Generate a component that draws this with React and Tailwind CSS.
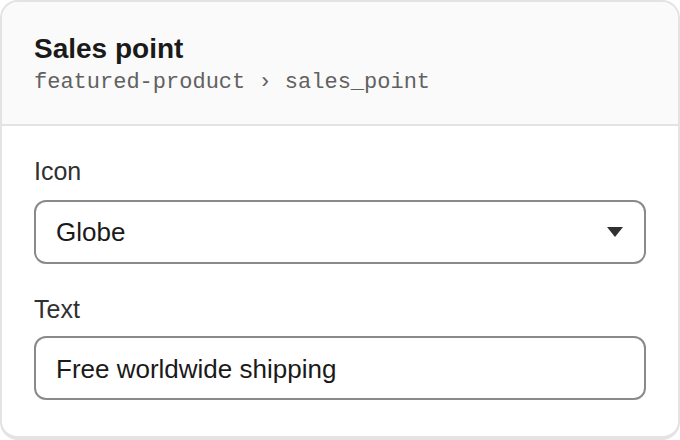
export default function App() {
  return (
    <div className="w-[680px] h-[440px] bg-white" style={{ fontFamily: '"Liberation Sans", Arial, sans-serif' }}>
      <div className="w-[680px] h-[440px] border-2 border-b-4 border-[#e3e3e3] rounded-[18px] overflow-hidden flex flex-col bg-white">
        <div className="h-[124px] shrink-0 bg-[#fafafa] border-b-2 border-[#e3e3e3] px-[32px] pt-[29px]">
          <div className="text-[28px] leading-[36px] font-bold text-[#1a1a1a]">Sales point</div>
          <div className="mt-[2px] text-[22px] leading-[28px] text-[#616161]" style={{ fontFamily: '"Liberation Mono", monospace' }}>
            featured-product › sales_point
          </div>
        </div>
        <div className="px-[32px] pt-[30px] flex flex-col">
          <label className="text-[25px] leading-[30px] text-[#303030]">Icon</label>
          <div className="mt-[14px] h-[64px] border-2 border-[#8a8a8a] rounded-[12px] flex items-center justify-between pl-[20px] pr-[20px]">
            <span className="text-[26px] leading-[30px] text-[#1a1a1a] -mt-[1px]">Globe</span>
            <svg width="16" height="10" viewBox="0 0 16 10" className="mr-[1px] -mt-[1px]">
              <polygon points="0,0 16,0 8,10" fill="#303030" />
            </svg>
          </div>
          <label className="mt-[30px] text-[25px] leading-[30px] text-[#303030]">Text</label>
          <div className="mt-[12px] h-[64px] border-2 border-[#8a8a8a] rounded-[12px] flex items-center pl-[20px]">
            <span className="text-[26px] leading-[30px] text-[#1a1a1a] mt-[1px]">Free worldwide shipping</span>
          </div>
        </div>
      </div>
    </div>
  );
}
